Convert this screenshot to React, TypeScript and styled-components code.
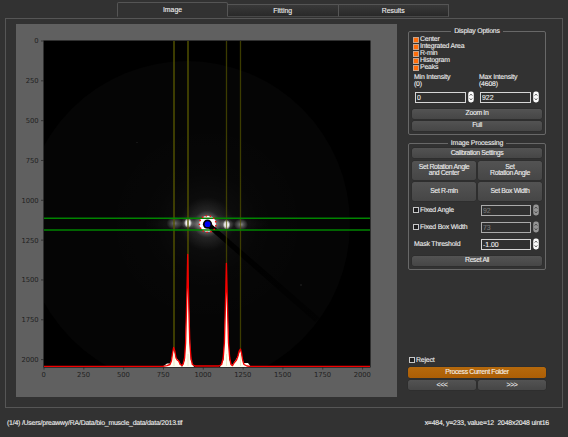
import React from 'react';
import styled, { createGlobalStyle, css } from 'styled-components';

const GlobalStyle = createGlobalStyle`
  * { box-sizing: border-box; }
  html, body { margin: 0; padding: 0; background: #323232; }
  body { overflow: hidden; }
  button, input { font: inherit; color: inherit; margin: 0; letter-spacing: inherit; }
`;

const Window = styled.div`
  width: 568px;
  height: 437px;
  display: flex;
  flex-direction: column;
  background: #323232;
  color: #ececec;
  font-family: 'Liberation Sans', Arial, sans-serif;
  font-size: 6.9px;
  letter-spacing: -0.18px;
  line-height: 7px;
  text-rendering: geometricPrecision;
  -webkit-text-stroke: 0.12px currentColor;
`;

const TabBar = styled.div`
  height: 18px;
  padding: 2px 0 1px 117px;
  display: flex;
  align-items: flex-end;
`;

const Tab = styled.button<{ $active?: boolean }>`
  width: ${p => (p.$active ? 111 : 110.5)}px;
  height: ${p => (p.$active ? 15 : 13)}px;
  padding: ${p => (p.$active ? '1px 0 2px' : '0')};
  border: 1px solid #555;
  border-left-width: ${p => (p.$active ? 1 : 0)}px;
  border-bottom-color: ${p => (p.$active ? 'transparent' : '#484848')};
  border-radius: ${p => (p.$active ? '2px 2px 0 0' : '0 1px 0 0')};
  background: ${p => (p.$active ? '#323232' : 'linear-gradient(#393939, #292929)')};
  line-height: 11px;
  letter-spacing: 0;
  text-align: center;
`;

const Page = styled.main`
  width: 558px;
  height: 390px;
  margin-left: 5px;
  padding: 5px 15px 0 10px;
  border: 1px solid #565656;
  display: flex;
  gap: 11px;
`;

const Canvas = styled.div`
  width: 381px;
  height: 373px;
  background: #606060;
  -webkit-text-stroke: 0;
  svg { display: block; }
`;

const Side = styled.aside`
  width: 138px;
  height: 373px;
  display: flex;
  flex-direction: column;
`;

const Group = styled.fieldset<{ $height: number; $top: number }>`
  height: ${p => p.$height}px;
  margin: ${p => p.$top}px 0 0;
  padding: 0 3px;
  border: 1px solid #686868;
  border-radius: 2px;
  min-width: 0;
`;

const Legend = styled.legend`
  margin: 0 auto;
  padding: 0 3px;
  height: 8px;
  line-height: 9px;
`;

const Stack = styled.div<{ $gap: number; $top?: number }>`
  display: flex;
  flex-direction: column;
  gap: ${p => p.$gap}px;
  padding-top: ${p => p.$top ?? 0}px;
`;

const Check = styled.label<{ $height?: number }>`
  height: ${p => p.$height ?? 6.9}px;
  padding-left: 1px;
  display: flex;
  align-items: center;
  gap: 1px;
  white-space: nowrap;
`;

const Box = styled.span<{ $on?: boolean }>`
  width: 6px;
  height: 6px;
  border: 1px solid ${p => (p.$on ? '#c9a58c' : '#c8c8c8')};
  background: ${p => (p.$on ? '#ff6d0a' : '#202020')};
  flex: none;
`;

const IntensityLabels = styled.div`
  display: grid;
  grid-template-columns: 65px 1fr;
  padding: 4px 0 0 2px;
  line-height: 6.6px;
`;

const IntensityFields = styled.div`
  display: grid;
  grid-template-columns: 65px 1fr;
  margin: 3px 0 5.5px;
  padding-left: 3px;
`;

const SpinWrap = styled.div<{ $dim?: boolean }>`
  height: 12px;
  display: flex;
  align-items: center;
  gap: 2px;
  color: ${p => (p.$dim ? '#777' : '#ececec')};
  svg { flex: none; }
`;

const Field = styled.input<{ $dim?: boolean; $narrow?: boolean }>`
  width: ${p => (p.$narrow ? 50 : 51)}px;
  height: 11px;
  padding: 0 1px;
  border: 1px solid ${p => (p.$dim ? '#aaa' : '#d6d6d6')};
  border-radius: 0;
  background: #303030;
  line-height: 9px;
  letter-spacing: 0;
  outline: none;
`;

const Button = styled.button<{ $h?: number; $accent?: boolean }>`
  width: 100%;
  height: ${p => p.$h ?? 10}px;
  padding: 0;
  border: 0;
  border-radius: 2.5px;
  background: linear-gradient(#535353, #464646);
  box-shadow: 0 0 0 0.5px #2a2a2a;
  text-align: center;
  line-height: 6.3px;
  letter-spacing: -0.36px;
  white-space: pre-line;
  ${p => p.$accent && css`
    background: linear-gradient(#b5690c, #ac5e06);
    color: #f6efe5;
    height: 11px;
  `}
`;

const Pair = styled.div`
  display: grid;
  grid-template-columns: 1fr 1fr;
  gap: 2px;
`;

const SettingRow = styled.div`
  height: 17px;
  display: flex;
  justify-content: space-between;
  align-items: center;
  padding: 0 3px 0 0;
`;

const Settings = styled.div`
  padding: 1px 0 3px;
`;

const Plain = styled.span`
  padding-left: 2px;
`;

const Footer = styled.div`
  margin-top: auto;
  padding-bottom: 7px;
`;

const Status = styled.footer`
  display: flex;
  justify-content: space-between;
  padding: 11.5px 19px 0 7px;
  line-height: 8px;
  letter-spacing: -0.2px;
  white-space: pre;
`;

const Stepper = ({ dim }: { dim?: boolean }) => (
  <svg width="6" height="12" viewBox="0 0 6 12">
    <rect x="0.2" y="0.6" width="5.6" height="10.8" rx="2.4" fill={dim ? '#949494' : '#fafafa'} />
    <path d="M1.7 4.6 3 3.1l1.3 1.5M1.7 7.4 3 8.9l1.3-1.5" fill="none" stroke="#333" strokeWidth="0.8" />
  </svg>
);

const Spin = ({ value, dim, narrow }: { value: string; dim?: boolean; narrow?: boolean }) => (
  <SpinWrap $dim={dim}>
    <Field defaultValue={value} disabled={dim} $dim={dim} $narrow={narrow} />
    <Stepper dim={dim} />
  </SpinWrap>
);

const TICKS = [0, 250, 500, 750, 1000, 1250, 1500, 1750, 2000];
const SCALE = 0.1593;
const PEAKS: [number, number][] = [[174, 2], [188, 2], [226.5, 1.3], [240.5, 1.3]];
const RING = Array.from({ length: 13 }, (_, i) => {
  const a = (i / 13) * Math.PI * 2 + 0.2;
  return [207.7 + Math.cos(a) * 8.3, 224 + Math.sin(a) * 8.3];
});

const CURVE =
  'M44 366.3H163L167 365.6L170 364.5L171.4 361L172.5 353.5L173.6 347.5L174.8 351L176 358L177.2 360L178.6 360.8' +
  'L180.2 364.4L182 365.5L183.2 364L184.6 358L185.6 343L186.5 310L187.2 280L187.7 254.5L188.2 280L188.9 310L189.8 343L191 358L192.4 364.5L195 366' +
  'H219L221.6 364.5L223.2 358L224.4 343L225.3 310L225.9 285L226.4 263.5L226.9 285L227.6 310L228.5 343L229.7 358L231 364.5L232.5 365.6' +
  'L234.4 362.5L236.5 360L238 356L239.2 351L240.4 349L241.5 353L242.6 360L244 364.5L247 366L250 366.3H370';

const Plot = () => (
  <svg width="381" height="373" viewBox="16 24 381 373">
    <defs>
      <clipPath id="axes"><rect x="44" y="41" width="326" height="326" /></clipPath>
      <radialGradient id="halo">
        <stop offset="0" stopColor="#fff" stopOpacity="0.65" />
        <stop offset="0.22" stopColor="#fff" stopOpacity="0.38" />
        <stop offset="0.5" stopColor="#fff" stopOpacity="0.09" />
        <stop offset="1" stopColor="#fff" stopOpacity="0" />
      </radialGradient>
      <radialGradient id="spot">
        <stop offset="0" stopColor="#fff" />
        <stop offset="0.5" stopColor="#fff" stopOpacity="0.9" />
        <stop offset="1" stopColor="#fff" stopOpacity="0" />
      </radialGradient>
      <radialGradient id="soft">
        <stop offset="0" stopColor="#fff" />
        <stop offset="0.4" stopColor="#fff" stopOpacity="0.5" />
        <stop offset="1" stopColor="#fff" stopOpacity="0" />
      </radialGradient>
      <linearGradient id="shade" x1="0" y1="0" x2="1" y2="1">
        <stop offset="0" stopColor="#000" />
        <stop offset="0.3" stopColor="#000" stopOpacity="0.9" />
        <stop offset="1" stopColor="#000" stopOpacity="0.5" />
      </linearGradient>
    </defs>
    <rect x="43.5" y="40.5" width="327" height="327" fill="#000" />
    <g clipPath="url(#axes)">
      <circle cx="187" cy="224" r="163" fill="#050505" />
      <circle cx="207" cy="224" r="105" fill="url(#halo)" opacity="0.08" />
      <ellipse cx="207" cy="224" rx="62" ry="10" fill="url(#halo)" opacity="0.5" />
      <circle cx="207" cy="224" r="27" fill="url(#halo)" />
      <ellipse cx="174.5" cy="223.3" rx="8" ry="6.5" fill="url(#soft)" opacity="0.42" />
      <ellipse cx="188" cy="223" rx="7" ry="6" fill="url(#soft)" opacity="0.35" />
      <ellipse cx="188" cy="223" rx="4" ry="5" fill="url(#spot)" />
      <ellipse cx="226.6" cy="224.7" rx="7" ry="6" fill="url(#soft)" opacity="0.35" />
      <ellipse cx="226.6" cy="224.7" rx="3.8" ry="5" fill="url(#spot)" />
      <ellipse cx="241" cy="224.5" rx="7" ry="6" fill="url(#soft)" opacity="0.52" />
      <path d="M199 224L200.5 219L204 216.5L208 215.8L212.5 217L215.5 220.5L216 225L214 229.5L210.5 231.5L206 231.8L202.5 230L200.2 227.5Z" fill="#fff" />
      <path d="M208 228L212 224.5L320 318L315 322Z" fill="url(#shade)" />
      <circle cx="207.5" cy="224.2" r="4.6" fill="#050505" />
      <circle cx="137" cy="142.5" r="0.6" fill="#292929" />
      <circle cx="301" cy="285" r="0.8" fill="#292929" />
      {PEAKS.map(([x, w]) => <line key={x} x1={x} x2={x} y1="41" y2="367" stroke="#545400" strokeWidth={w} opacity="0.7" />)}
      <path d="M44 218.2H370M44 230.1H370" stroke="#008400" strokeWidth="1.5" />
      {RING.map(([x, y]) => <circle key={x} cx={x} cy={y} r="0.85" fill="#f01010" />)}
      <circle cx="207.6" cy="224.2" r="2.9" fill="#0000f4" />
      <path d="M160 367L164 365.8L167 363.5H170.5L173.6 349L176 357.5L178.6 360.5L182 367L184.8 360L187.7 268L190.7 360L194 367H220L223.5 360L226.4 278L229.4 360L232 365.5L234.4 362L238 356L240.4 350L243.5 363H248L251 367Z" fill="#fffdf1" />
      <path d={CURVE} fill="none" stroke="#f20000" strokeWidth="1.35" strokeLinejoin="round" />
      {PEAKS.map(([x]) => <line key={x} x1={x} x2={x} y1="354" y2="366" stroke="#e3e3b4" strokeWidth="1" opacity="0.65" />)}
    </g>
    <g stroke="#222" strokeWidth="0.7">
      {TICKS.map(t => <path key={t} d={`M41 ${41 + t * SCALE}h3M${44 + t * SCALE} 367v2.6`} />)}
    </g>
    <g fill="#202020" fontFamily="DejaVu Sans, sans-serif" fontSize="6.8" letterSpacing="-0.05">
      {TICKS.map(t => (
        <React.Fragment key={t}>
          <text x="38.6" y={43.4 + t * SCALE} textAnchor="end">{t}</text>
          <text x={43.7 + t * SCALE} y="377.3" textAnchor="middle">{t}</text>
        </React.Fragment>
      ))}
    </g>
  </svg>
);

const OPTIONS = ['Center', 'Integrated Area', 'R-min', 'Histogram', 'Peaks'];

export default function App() {
  return (
    <>
      <GlobalStyle />
      <Window>
        <TabBar>
          <Tab $active>Image</Tab>
          <Tab>Fitting</Tab>
          <Tab>Results</Tab>
        </TabBar>
        <Page>
          <Canvas><Plot /></Canvas>
          <Side>
            <Group $height={108} $top={3}>
              <Legend>Display Options</Legend>
              <Stack $gap={0} $top={1.5}>
                {OPTIONS.map(o => <Check key={o}><Box $on />{o}</Check>)}
              </Stack>
              <IntensityLabels>
                <span>Min Intensity<br />(0)</span>
                <span>Max Intensity<br />(4608)</span>
              </IntensityLabels>
              <IntensityFields>
                <Spin value="0" />
                <Spin value="922" />
              </IntensityFields>
              <Stack $gap={2}>
                <Button>Zoom In</Button>
                <Button>Full</Button>
              </Stack>
            </Group>
            <Group $height={131} $top={4}>
              <Legend>Image Processing</Legend>
              <Stack $gap={2.5} $top={1}>
                <Button>Calibration Settings</Button>
                <Pair>
                  <Button $h={19}>{'Set Rotation Angle\nand Center'}</Button>
                  <Button $h={19}>{'Set\nRotation Angle'}</Button>
                  <Button $h={19}>Set R-min</Button>
                  <Button $h={19}>Set Box Width</Button>
                </Pair>
              </Stack>
              <Settings>
                <SettingRow>
                  <Check><Box />Fixed Angle</Check>
                  <Spin value="92" dim narrow />
                </SettingRow>
                <SettingRow>
                  <Check><Box />Fixed Box Width</Check>
                  <Spin value="73" dim narrow />
                </SettingRow>
                <SettingRow>
                  <Plain>Mask Threshold</Plain>
                  <Spin value="-1.00" narrow />
                </SettingRow>
              </Settings>
              <Button>Reset All</Button>
            </Group>
            <Footer>
              <Check $height={12}><Box />Reject</Check>
              <Stack $gap={2} $top={1}>
                <Button $accent>Process Current Folder</Button>
                <Pair>
                  <Button>&lt;&lt;&lt;</Button>
                  <Button>&gt;&gt;&gt;</Button>
                </Pair>
              </Stack>
            </Footer>
          </Side>
        </Page>
        <Status>
          <span>(1/4) /Users/preawwy/RA/Data/bio_muscle_data/data/2013.tif</span>
          <span>x=484, y=233, value=12  2048x2048 uint16</span>
        </Status>
      </Window>
    </>
  );
}
